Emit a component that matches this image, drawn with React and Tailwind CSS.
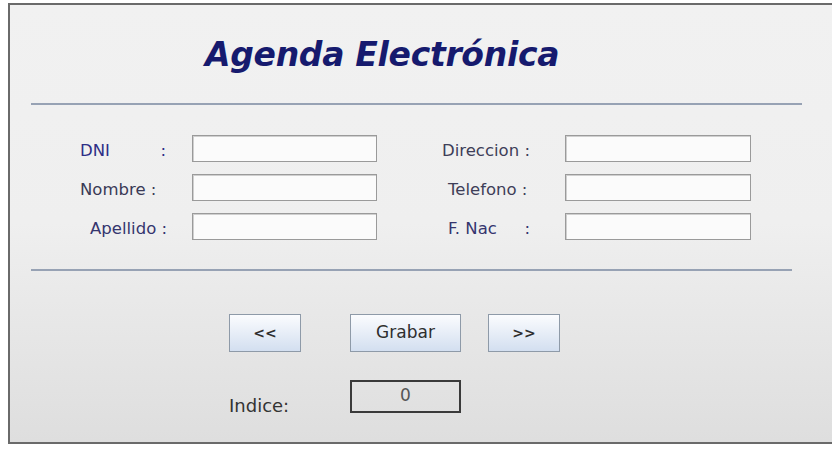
import React from 'react';

const labelFont = { fontFamily: '"DejaVu Sans", "Liberation Sans", sans-serif' };

function Field({ children, className }) {
    return (
        <div className={`flex items-center h-[27px] pt-[6px] text-[16.5px] ${className}`} style={labelFont}>
            {children}
        </div>
    );
}

function Input() {
    return <div className="h-[27px] border border-[#9a9a9a] bg-[#fbfbfb] shadow-[inset_1px_1px_0_#cfcfcf]"></div>;
}

function NavButton({ children, className }) {
    return (
        <button className={`h-[38px] border border-[#8e9aa8] bg-gradient-to-b from-[#fbfcfe] to-[#d3dff0] text-[#2e2e2e] ${className}`} style={labelFont}>
            {children}
        </button>
    );
}

export default function App() {
    return (
        <div className="w-[832px] h-[450px] bg-white overflow-hidden">
            <div className="ml-[8px] mt-[3px] h-[441px] border-2 border-r-0 border-[#6a6a6a] bg-gradient-to-b from-[#f1f1f1] via-[#efefef] to-[#dedede]">
                <h1 className="pl-[195px] pt-[32px] text-[33px] leading-[36px] tracking-[-0.3px] font-bold italic text-[#161a6e]" style={{ fontFamily: '"DejaVu Sans", sans-serif' }}>
                    Agenda Electrónica
                </h1>
                <div className="ml-[21px] mr-[30px] mt-[30px] h-[2px] bg-[#97a2b4]"></div>

                <div className="flex mt-[30px]">
                    <div className="ml-[70px] w-[112px] flex flex-col gap-[12px]">
                        <Field className="text-[#2e2e86]">
                            <span className="flex w-[86px] justify-between"><span>DNI</span><span>:</span></span>
                        </Field>
                        <Field className="text-[#3a3a56]">Nombre :</Field>
                        <Field className="pl-[10px] text-[#35356e]">Apellido :</Field>
                    </div>
                    <div className="w-[185px] flex flex-col gap-[12px]">
                        <Input />
                        <Input />
                        <Input />
                    </div>
                    <div className="ml-[65px] w-[123px] flex flex-col gap-[12px]">
                        <Field className="text-[#3e3e58]">Direccion :</Field>
                        <Field className="pl-[6px] text-[#3e3e58]">Telefono :</Field>
                        <Field className="pl-[6px] text-[#35356e]">
                            <span className="flex w-[82px] justify-between"><span>F. Nac</span><span>:</span></span>
                        </Field>
                    </div>
                    <div className="w-[186px] flex flex-col gap-[12px]">
                        <Input />
                        <Input />
                        <Input />
                    </div>
                </div>

                <div className="ml-[21px] mr-[40px] mt-[29px] h-[2px] bg-[#97a2b4]"></div>

                <div className="flex mt-[43px] pl-[219px]">
                    <NavButton className="w-[72px] text-[14px] font-bold">&lt;&lt;</NavButton>
                    <NavButton className="ml-[49px] w-[111px] text-[17px]">Grabar</NavButton>
                    <NavButton className="ml-[27px] w-[72px] text-[14px] font-bold">&gt;&gt;</NavButton>
                </div>

                <div className="flex mt-[28px] pl-[219px]">
                    <div className="w-[121px] pt-[12px] text-[18px] text-[#333]" style={labelFont}>Indice:</div>
                    <div className="w-[111px] h-[33px] border-2 border-[#3a3a3a] flex items-center justify-center pb-[2px] text-[17px] text-[#555]" style={labelFont}>0</div>
                </div>
            </div>
        </div>
    );
}
